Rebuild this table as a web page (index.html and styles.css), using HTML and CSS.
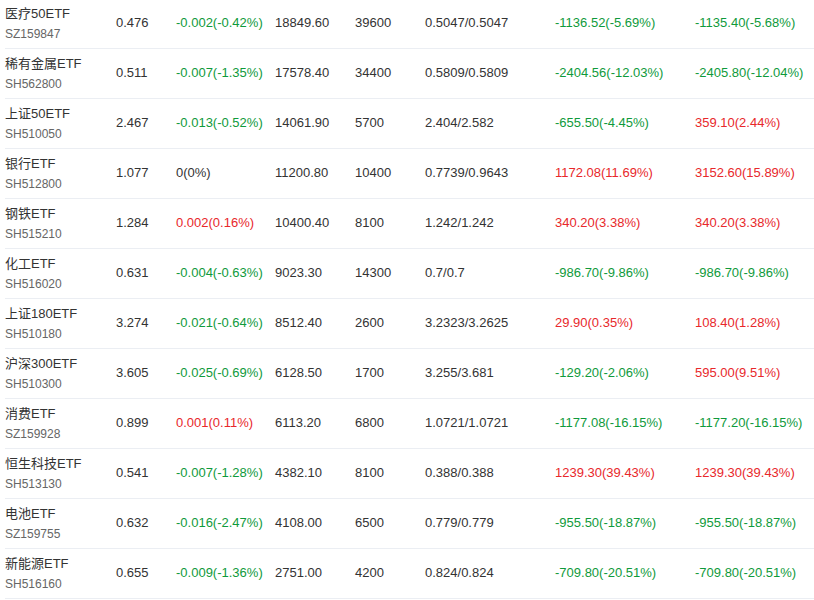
FILE: index.html
```
<!DOCTYPE html>
<html>
<head>
<meta charset="utf-8">
<link rel="stylesheet" href="styles.css">
</head>
<body>
<div class="table">
  <div class="row"><div class="name"><div class="n">医疗50ETF</div><div class="c">SZ159847</div></div><div>0.476</div><div class="dn">-0.002(-0.42%)</div><div>18849.60</div><div>39600</div><div>0.5047/0.5047</div><div class="dn">-1136.52(-5.69%)</div><div class="dn">-1135.40(-5.68%)</div></div>
  <div class="row"><div class="name"><div class="n">稀有金属ETF</div><div class="c">SH562800</div></div><div>0.511</div><div class="dn">-0.007(-1.35%)</div><div>17578.40</div><div>34400</div><div>0.5809/0.5809</div><div class="dn">-2404.56(-12.03%)</div><div class="dn">-2405.80(-12.04%)</div></div>
  <div class="row"><div class="name"><div class="n">上证50ETF</div><div class="c">SH510050</div></div><div>2.467</div><div class="dn">-0.013(-0.52%)</div><div>14061.90</div><div>5700</div><div>2.404/2.582</div><div class="dn">-655.50(-4.45%)</div><div class="up">359.10(2.44%)</div></div>
  <div class="row"><div class="name"><div class="n">银行ETF</div><div class="c">SH512800</div></div><div>1.077</div><div>0(0%)</div><div>11200.80</div><div>10400</div><div>0.7739/0.9643</div><div class="up">1172.08(11.69%)</div><div class="up">3152.60(15.89%)</div></div>
  <div class="row"><div class="name"><div class="n">钢铁ETF</div><div class="c">SH515210</div></div><div>1.284</div><div class="up">0.002(0.16%)</div><div>10400.40</div><div>8100</div><div>1.242/1.242</div><div class="up">340.20(3.38%)</div><div class="up">340.20(3.38%)</div></div>
  <div class="row"><div class="name"><div class="n">化工ETF</div><div class="c">SH516020</div></div><div>0.631</div><div class="dn">-0.004(-0.63%)</div><div>9023.30</div><div>14300</div><div>0.7/0.7</div><div class="dn">-986.70(-9.86%)</div><div class="dn">-986.70(-9.86%)</div></div>
  <div class="row"><div class="name"><div class="n">上证180ETF</div><div class="c">SH510180</div></div><div>3.274</div><div class="dn">-0.021(-0.64%)</div><div>8512.40</div><div>2600</div><div>3.2323/3.2625</div><div class="up">29.90(0.35%)</div><div class="up">108.40(1.28%)</div></div>
  <div class="row"><div class="name"><div class="n">沪深300ETF</div><div class="c">SH510300</div></div><div>3.605</div><div class="dn">-0.025(-0.69%)</div><div>6128.50</div><div>1700</div><div>3.255/3.681</div><div class="dn">-129.20(-2.06%)</div><div class="up">595.00(9.51%)</div></div>
  <div class="row"><div class="name"><div class="n">消费ETF</div><div class="c">SZ159928</div></div><div>0.899</div><div class="up">0.001(0.11%)</div><div>6113.20</div><div>6800</div><div>1.0721/1.0721</div><div class="dn">-1177.08(-16.15%)</div><div class="dn">-1177.20(-16.15%)</div></div>
  <div class="row"><div class="name"><div class="n">恒生科技ETF</div><div class="c">SH513130</div></div><div>0.541</div><div class="dn">-0.007(-1.28%)</div><div>4382.10</div><div>8100</div><div>0.388/0.388</div><div class="up">1239.30(39.43%)</div><div class="up">1239.30(39.43%)</div></div>
  <div class="row"><div class="name"><div class="n">电池ETF</div><div class="c">SZ159755</div></div><div>0.632</div><div class="dn">-0.016(-2.47%)</div><div>4108.00</div><div>6500</div><div>0.779/0.779</div><div class="dn">-955.50(-18.87%)</div><div class="dn">-955.50(-18.87%)</div></div>
  <div class="row"><div class="name"><div class="n">新能源ETF</div><div class="c">SH516160</div></div><div>0.655</div><div class="dn">-0.009(-1.36%)</div><div>2751.00</div><div>4200</div><div>0.824/0.824</div><div class="dn">-709.80(-20.51%)</div><div class="dn">-709.80(-20.51%)</div></div>
</div>
</body>
</html>
```
FILE: styles.css
```
html, body {
  margin: 0;
  padding: 0;
  background: #fff;
}
body {
  font-family: "Liberation Sans", Arial, "Noto Sans CJK SC", sans-serif;
  font-size: 13px;
  color: #333;
}
.table {
  margin: -1px 0 0 5px;
}
.row {
  display: grid;
  grid-template-columns: 111px 60px 99px 80px 70px 130px 140px 1fr;
  height: 46px;
  padding-bottom: 3px;
  align-items: center;
  border-bottom: 1px solid #ebeef3;
}
.name {
  align-self: start;
  padding-top: 6px;
}
.n {
  line-height: 18px;
  color: #333;
}
.c {
  margin-top: 2px;
  line-height: 18px;
  font-size: 12px;
  color: #666;
}
.dn {
  color: #0f9a3b;
}
.up {
  color: #e8282b;
}
```
